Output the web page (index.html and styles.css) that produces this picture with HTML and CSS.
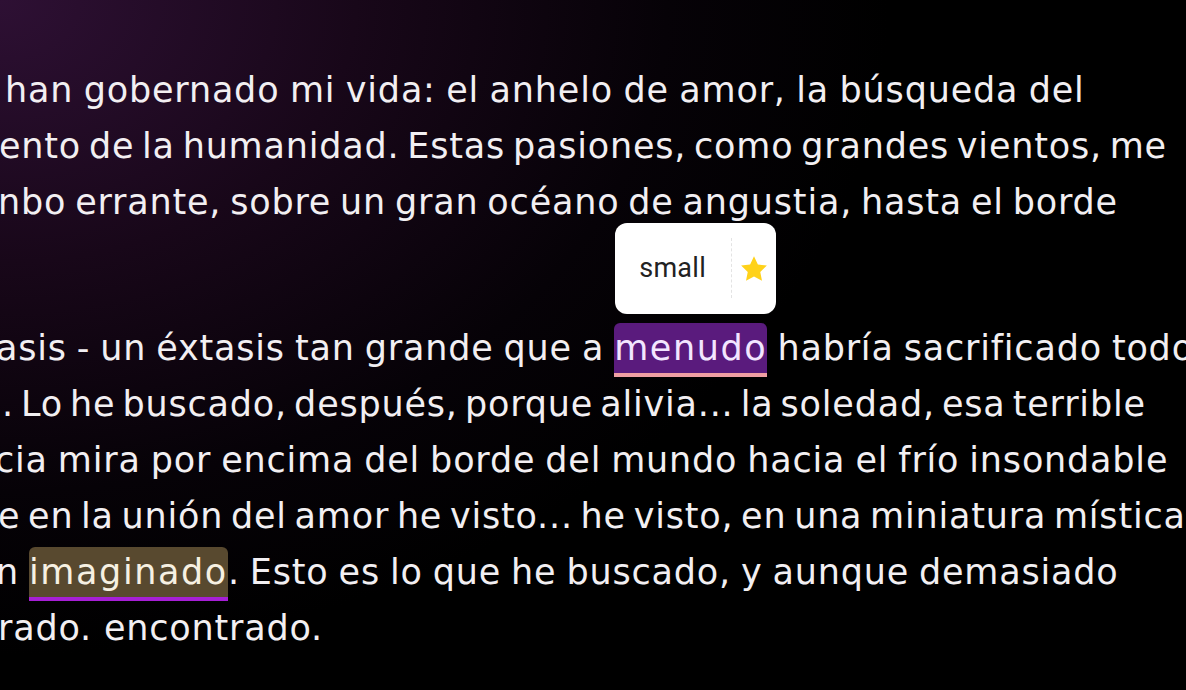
FILE: index.html
```html
<!DOCTYPE html>
<html lang="es">
<head>
<meta charset="utf-8">
<title>Tres pasiones</title>
<link rel="stylesheet" href="styles.css">
</head>
<body>
<main class="page">
  <article class="passage">
    <p class="para">
      <span class="line l1">han gobernado mi vida: el anhelo de amor, la búsqueda del</span>
      <span class="line l2">ento de la humanidad. Estas pasiones, como grandes vientos, me</span>
      <span class="line l3">nbo errante, sobre un gran océano de angustia, hasta el borde</span>
      <span class="line l4">&nbsp;</span>
    </p>
    <p class="para">
      <span class="line l5">asis - un éxtasis tan grande que a <mark class="hl hl-purple">menudo<span class="tooltip"><span class="tip-label">small</span><span class="tip-sep"></span><svg class="tip-star" viewBox="0 0 24 24" aria-hidden="true"><path d="M12 1.8l3.1 6.6 7.2.9-5.3 5 1.4 7.1L12 17.9l-6.4 3.5 1.4-7.1-5.3-5 7.2-.9z" fill="#ffd21a"/></svg></span></mark> habría sacrificado todo el</span>
      <span class="line l6">. Lo he buscado, después, porque alivia... la soledad, esa terrible</span>
      <span class="line l7">cia mira por encima del borde del mundo hacia el frío insondable</span>
      <span class="line l8">e en la unión del amor he visto... he visto, en una miniatura mística</span>
      <span class="line l9">n <mark class="hl hl-olive">imaginado</mark>. Esto es lo que he buscado, y aunque demasiado</span>
      <span class="line l10">rado. encontrado.</span>
    </p>
  </article>
</main>
</body>
</html>
```

FILE: styles.css
```css
html, body {
  margin: 0;
  height: 100%;
  overflow: hidden;
}

body {
  background:
    radial-gradient(ellipse 75% 95% at 0 0, #2e1034 0%, #180719 40%, #060207 75%, #000 100%);
  background-color: #000;
  color: #f2eff2;
  font-family: "DejaVu Sans", "Inter", sans-serif;
}

.page {
  padding-top: 62px;
}

.passage {
  font-size: 35px;
  line-height: 56px;
  letter-spacing: 0.8px;
  word-spacing: -3px;
}

.para {
  margin: 0 0 34px;
}

.line {
  display: block;
  white-space: nowrap;
}

.l1 { padding-left: 5px; word-spacing: -1.4px; }
.l2 { margin-left: -1px; word-spacing: -4.1px; }
.l3 { margin-left: -2px; }
.l5 { margin-left: -4px; word-spacing: -1.9px; }
.l6 { padding-left: 2px; word-spacing: -4.8px; }
.l7 { margin-left: -5px; word-spacing: -1.9px; }
.l8 { margin-left: -2px; word-spacing: -4.2px; }
.l9 { margin-left: -4px; word-spacing: -1.9px; }
.l10 { margin-left: -2px; word-spacing: 0; }

.hl {
  position: relative;
  padding: 5px 0;
  border-radius: 6px 6px 0 0;
  border-bottom: 4px solid;
  letter-spacing: 1.6px;
  word-spacing: 0;
}

.hl-purple {
  background: #5a1b7d;
  color: #f3e6ff;
  border-bottom-color: #ef9fa3;
}

.hl-olive {
  background: #58492f;
  color: #f6f0e2;
  border-bottom-color: #a61fd6;
}

.tooltip {
  position: absolute;
  left: 1px;
  bottom: calc(100% + 9px);
  display: flex;
  align-items: center;
  width: 161px;
  height: 91px;
  box-sizing: border-box;
  padding: 0 7px 0 24px;
  background: #fff;
  border-radius: 12px;
  font-family: "Roboto", "Liberation Sans", sans-serif;
  font-size: 27px;
  line-height: 1;
  letter-spacing: 0.3px;
  word-spacing: 0;
  color: #222;
}

.tip-label {
  flex: 0 0 auto;
}

.tip-sep {
  align-self: stretch;
  margin: 15px 7px 16px auto;
  border-left: 1px dashed #e3e3e3;
}

.tip-star {
  width: 30px;
  height: 30px;
  flex: 0 0 auto;
}
```
